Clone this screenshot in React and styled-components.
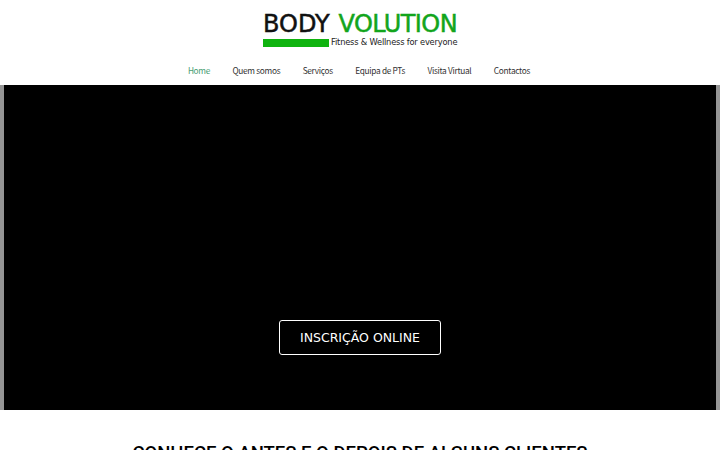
import React from 'react';
import styled, { createGlobalStyle } from 'styled-components';

const navLinks = ['Home', 'Quem somos', 'Serviços', 'Equipa de PTs', 'Visita Virtual', 'Contactos'];

const App = () => (
  <>
    <GlobalStyle />
    <Header>
      <Logo>
        <LogoTitle>
          <LogoBlack>BODY</LogoBlack>
          <LogoGreen>VOLUTION</LogoGreen>
        </LogoTitle>
        <LogoBottom>
          <LogoBar />
          <LogoTagline>Fitness &amp; Wellness for everyone</LogoTagline>
        </LogoBottom>
      </Logo>
      <Nav>
        {navLinks.map((link, index) => (
          <NavLink key={link} $active={index === 0}>
            {link}
          </NavLink>
        ))}
      </Nav>
    </Header>
    <Hero>
      <HeroVideo>
        <SignUpButton>INSCRIÇÃO ONLINE</SignUpButton>
      </HeroVideo>
    </Hero>
    <Section>
      <SectionTitle>CONHECE O ANTES E O DEPOIS DE ALGUNS CLIENTES</SectionTitle>
    </Section>
  </>
);

export default App;

const GlobalStyle = createGlobalStyle`
  html, body {
    margin: 0;
    height: 450px;
    overflow: hidden;
    background: #fff;
  }
`;

const Header = styled.header`
  display: flex;
  flex-direction: column;
  align-items: center;
  height: 85px;
  padding-top: 12px;
  box-sizing: border-box;
`;

const Logo = styled.div`
  display: flex;
  flex-direction: column;
  width: 194px;
  height: 37px;
`;

const LogoTitle = styled.div`
  display: flex;
  justify-content: space-between;
  font-family: 'DejaVu Sans', sans-serif;
  font-size: 24px;
  line-height: 25px;
  height: 25px;
  -webkit-text-stroke: 0.5px;
`;

const LogoBlack = styled.span`
  color: #111;
`;

const LogoGreen = styled.span`
  color: #12a51c;
  letter-spacing: -0.6px;
`;

const LogoBottom = styled.div`
  display: flex;
  align-items: center;
  gap: 2px;
`;

const LogoBar = styled.div`
  width: 66px;
  height: 8px;
  background: #0fb30f;
  flex-shrink: 0;
`;

const LogoTagline = styled.span`
  font-family: 'DejaVu Sans', sans-serif;
  font-size: 8.3px;
  letter-spacing: -0.2px;
  line-height: 11px;
  color: #222;
  white-space: nowrap;
`;

const Nav = styled.nav`
  display: flex;
  gap: 22.4px;
  margin-top: 14px;
  padding-right: 2px;
`;

const NavLink = styled.a`
  font-family: 'Noto Sans CJK SC', 'Noto Sans', sans-serif;
  font-size: 8.3px;
  letter-spacing: -0.3px;
  line-height: 14px;
  color: ${({ $active }) => ($active ? '#4a9d72' : '#333')};
`;

const Hero = styled.div`
  height: 325px;
  padding: 0 4px;
  background: #959595;
`;

const HeroVideo = styled.div`
  display: flex;
  align-items: flex-end;
  justify-content: center;
  height: 100%;
  padding-bottom: 55px;
  box-sizing: border-box;
  background: #000;
`;

const SignUpButton = styled.button`
  width: 162px;
  height: 35px;
  padding: 0;
  background: transparent;
  border: 1px solid #fff;
  border-radius: 3px;
  color: #fff;
  font-family: 'DejaVu Sans', sans-serif;
  font-size: 12.5px;
`;

const Section = styled.section`
  padding-top: 31px;
  text-align: center;
`;

const SectionTitle = styled.h2`
  margin: 0;
  font-family: 'Roboto', sans-serif;
  font-size: 18.5px;
  font-weight: 500;
  line-height: 24px;
  color: #000;
`;
